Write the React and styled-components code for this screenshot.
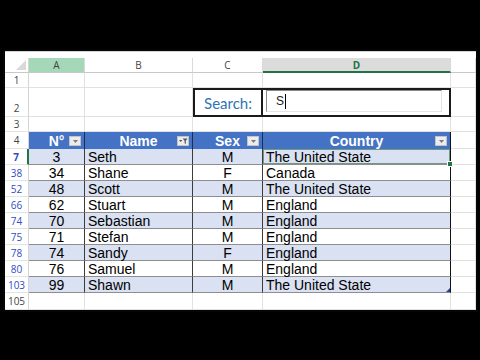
import styled, { createGlobalStyle, css } from "styled-components";

const GlobalStyle = createGlobalStyle`
  html, body {
    margin: 0;
    background: #000;
  }
  body {
    width: 480px;
    height: 360px;
    overflow: hidden;
  }
`;

const Screen = styled.div`
  padding: 49px 0 0 3px;
`;

const Panel = styled.div`
  width: 471px;
  border: 2px solid #050505;
  background: #fff;
  overflow: hidden;
`;

const TopStrip = styled.div`
  height: 6px;
  border-top: 1px solid #d6d6d6;
`;

const Sheet = styled.div`
  display: grid;
  grid-template-columns: 24px 56px 108px 70px 188px 25px;
  grid-template-rows: 15px 15px 29px 15px 17px repeat(9, 16px) 17px;
  font-family: "Liberation Sans", Arial, sans-serif;
`;

const Corner = styled.div`
  position: relative;
  border-right: 1px solid #d4d4d4;
  border-bottom: 1px solid #c8c8c8;
  &::after {
    content: "";
    position: absolute;
    right: 2px;
    bottom: 2px;
    border-left: 10px solid transparent;
    border-bottom: 10px solid #d9d9d9;
  }
`;

const ColHeader = styled.div`
  display: flex;
  align-items: center;
  justify-content: center;
  font-family: "Open Sans", sans-serif;
  font-size: 10px;
  color: #444;
  border-right: 1px solid #d9d9d9;
  border-bottom: 1px solid #c8c8c8;
  ${(p) =>
    p.$tint &&
    css`
      background: #a4d8b8;
    `}
  ${(p) =>
    p.$selected &&
    css`
      background: #dcdcdc;
      color: #217346;
      font-weight: 700;
      border-bottom: 2px solid #217346;
    `}
`;

const RowHeader = styled.div`
  display: flex;
  align-items: ${(p) => (p.$bottom ? "flex-end" : "center")};
  justify-content: center;
  padding-bottom: ${(p) => (p.$bottom ? "1px" : "0")};
  font-family: "Open Sans", sans-serif;
  font-size: 10px;
  color: ${(p) => (p.$filtered ? "#2f4cc4" : "#444")};
  font-weight: ${(p) => (p.$current ? 700 : 400)};
  border-right: ${(p) => (p.$current ? "2px solid #217346" : "1px solid #d4d4d4")};
  border-bottom: 1px solid #e3e3e3;
`;

const Cell = styled.div`
  border-right: 1px solid #e1e1e1;
  border-bottom: 1px solid #e1e1e1;
`;

const SearchLabel = styled.div`
  display: flex;
  align-items: center;
  justify-content: center;
  border: 2px solid #1a1a1a;
  font-family: Lato, "Open Sans", sans-serif;
  font-size: 15px;
  color: #2e74b5;
`;

const SearchCell = styled.div`
  display: flex;
  align-items: flex-start;
  padding-left: 3px;
  border: 2px solid #1a1a1a;
  border-left: none;
`;

const SearchBox = styled.div`
  display: flex;
  align-items: center;
  width: 176px;
  height: 22px;
  box-sizing: border-box;
  padding-left: 9px;
  border-top: 1px solid #8a8a8a;
  border-left: 1px solid #8a8a8a;
  border-right: 1px solid #e4e4e4;
  border-bottom: 1px solid #e4e4e4;
  font-size: 12px;
  color: #222;
`;

const Caret = styled.span`
  width: 1px;
  height: 15px;
  margin-left: 1px;
  background: #000;
`;

const HeadCell = styled.div`
  position: relative;
  display: flex;
  align-items: center;
  justify-content: center;
  background: #4472c4;
  color: #fff;
  font-size: 14px;
  font-weight: 700;
  border-right: 1px solid ${(p) => (p.$last ? "#111" : "#1f2d52")};
`;

const FilterButton = styled.span`
  position: absolute;
  right: 3px;
  top: 4px;
  width: 12px;
  height: 10px;
  box-sizing: border-box;
  display: flex;
  align-items: center;
  justify-content: center;
  background: #ececec;
  border: 1px solid #c4c4c4;
`;

const DataCell = styled.div`
  position: relative;
  display: flex;
  align-items: center;
  justify-content: ${(p) => (p.$center ? "center" : "flex-start")};
  padding-left: ${(p) => (p.$center ? "0" : "3px")};
  background: ${(p) => (p.$band ? "#d9e1f2" : "#fff")};
  font-size: 14px;
  color: #000;
  white-space: nowrap;
  border-bottom: 1px solid #8e8e8e;
  border-right: 1px solid ${(p) => (p.$last ? "#111" : "#3c3c3c")};
  ${(p) =>
    p.$active &&
    css`
      box-shadow: inset 0 0 0 1px #6f9a80;
      &::after {
        content: "";
        position: absolute;
        right: -3px;
        bottom: -3px;
        width: 4px;
        height: 4px;
        background: #217346;
        border: 1px solid #fff;
        z-index: 2;
      }
    `}
  ${(p) =>
    p.$resize &&
    css`
      &::after {
        content: "";
        position: absolute;
        right: 0;
        bottom: 0;
        border-left: 4px solid transparent;
        border-bottom: 4px solid #24408e;
      }
    `}
`;

const Arrow = () => (
  <svg width="5" height="3" viewBox="0 0 5 3">
    <path d="M0 0h5L2.5 3z" fill="#7a7a7a" />
  </svg>
);

const FunnelArrow = () => (
  <svg width="9" height="6" viewBox="0 0 9 6">
    <path d="M0 2h3.4L1.7 4z" fill="#555" />
    <path d="M3.6 0.5h5L6.8 2.8v3.2L5.6 5.2V2.8z" fill="#555" />
  </svg>
);

const people = [
  [7, 3, "Seth", "M", "The United State"],
  [38, 34, "Shane", "F", "Canada"],
  [52, 48, "Scott", "M", "The United State"],
  [66, 62, "Stuart", "M", "England"],
  [74, 70, "Sebastian", "M", "England"],
  [75, 71, "Stefan", "M", "England"],
  [78, 74, "Sandy", "F", "England"],
  [80, 76, "Samuel", "M", "England"],
  [103, 99, "Shawn", "M", "The United State"],
];

const App = () => {
  return (
    <>
      <GlobalStyle />
      <Screen>
        <Panel>
          <TopStrip />
          <Sheet>
            <Corner />
            <ColHeader $tint>A</ColHeader>
            <ColHeader>B</ColHeader>
            <ColHeader>C</ColHeader>
            <ColHeader $selected>D</ColHeader>
            <ColHeader />

            <RowHeader>1</RowHeader>
            <Cell />
            <Cell />
            <Cell />
            <Cell />
            <Cell />

            <RowHeader $bottom>2</RowHeader>
            <Cell />
            <Cell />
            <SearchLabel>Search:</SearchLabel>
            <SearchCell>
              <SearchBox>
                S<Caret />
              </SearchBox>
            </SearchCell>
            <Cell />

            <RowHeader>3</RowHeader>
            <Cell />
            <Cell />
            <Cell />
            <Cell />
            <Cell />

            <RowHeader>4</RowHeader>
            <HeadCell>
              N°
              <FilterButton>
                <Arrow />
              </FilterButton>
            </HeadCell>
            <HeadCell>
              Name
              <FilterButton>
                <FunnelArrow />
              </FilterButton>
            </HeadCell>
            <HeadCell>
              Sex
              <FilterButton>
                <Arrow />
              </FilterButton>
            </HeadCell>
            <HeadCell $last>
              Country
              <FilterButton>
                <Arrow />
              </FilterButton>
            </HeadCell>
            <Cell />

            {people.map(([row, no, name, sex, country], i) => {
              const band = i % 2 === 0;
              const last = i === people.length - 1;
              return [
                <RowHeader key={`r${row}`} $filtered $current={i === 0}>
                  {row}
                </RowHeader>,
                <DataCell key={`a${row}`} $band={band} $center>
                  {no}
                </DataCell>,
                <DataCell key={`b${row}`} $band={band}>
                  {name}
                </DataCell>,
                <DataCell key={`c${row}`} $band={band} $center>
                  {sex}
                </DataCell>,
                <DataCell
                  key={`d${row}`}
                  $band={band}
                  $last
                  $active={i === 0}
                  $resize={last}
                >
                  {country}
                </DataCell>,
                <Cell key={`e${row}`} />,
              ];
            })}

            <RowHeader>105</RowHeader>
            <Cell />
            <Cell />
            <Cell />
            <Cell />
            <Cell />
          </Sheet>
        </Panel>
      </Screen>
    </>
  );
};

export default App;
